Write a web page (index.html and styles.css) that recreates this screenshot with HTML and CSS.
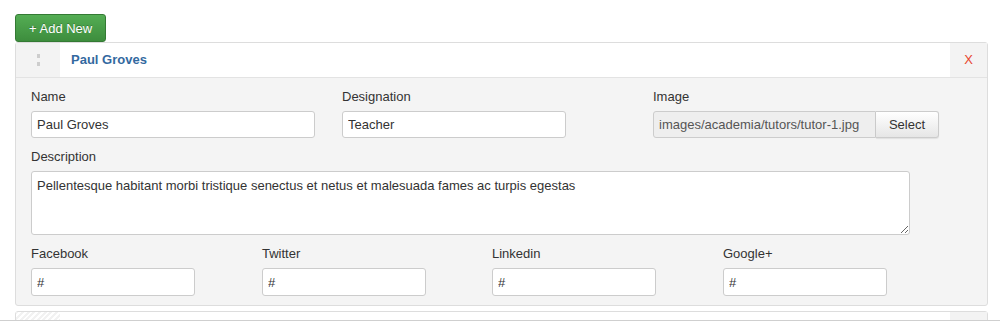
FILE: index.html
```html
<!DOCTYPE html>
<html lang="en">

<head>
    <meta charset="utf-8">
    <title>Tutors</title>
    <link rel="stylesheet" href="styles.css">
</head>

<body>
    <div class="page">
        <button class="add-btn">+ Add New</button>

        <div class="item">
            <div class="item-head">
                <span class="handle"><span class="grip"></span></span>
                <span class="item-title">Paul Groves</span>
                <span class="remove">X</span>
            </div>
            <div class="item-body">
                <div class="row three">
                    <div class="field">
                        <label>Name</label>
                        <input type="text" class="w-name" value="Paul Groves">
                    </div>
                    <div class="field">
                        <label>Designation</label>
                        <input type="text" class="w-desig" value="Teacher">
                    </div>
                    <div class="field">
                        <label>Image</label>
                        <div class="media">
                            <input type="text" class="w-image" value="images/academia/tutors/tutor-1.jpg" readonly>
                            <button class="select-btn">Select</button>
                        </div>
                    </div>
                </div>
                <div class="field">
                    <label>Description</label>
                    <textarea>Pellentesque habitant morbi tristique senectus et netus et malesuada fames ac turpis egestas</textarea>
                </div>
                <div class="row four">
                    <div class="field">
                        <label>Facebook</label>
                        <input type="text" class="w-social" value="#">
                    </div>
                    <div class="field">
                        <label>Twitter</label>
                        <input type="text" class="w-social" value="#">
                    </div>
                    <div class="field">
                        <label>Linkedin</label>
                        <input type="text" class="w-social" value="#">
                    </div>
                    <div class="field">
                        <label>Google+</label>
                        <input type="text" class="w-social" value="#">
                    </div>
                </div>
            </div>
        </div>

        <div class="item collapsed">
            <div class="item-head">
                <span class="handle striped"></span>
                <span class="item-title faded">Teresa Still</span>
                <span class="remove striped"></span>
            </div>
        </div>
    </div>
</body>

</html>
```

FILE: styles.css
```css
* {
    box-sizing: border-box;
}

body {
    margin: 0;
    font-family: "Liberation Sans", Arial, sans-serif;
    font-size: 13px;
    color: #333;
    background: #fff;
}

.page {
    height: 321px;
    overflow: hidden;
    padding: 14px 12px 0 15px;
    border-bottom: 1px solid #cfcfcf;
}

.add-btn {
    display: block;
    height: 28px;
    padding: 0 13px;
    font-family: inherit;
    font-size: 13px;
    color: #fff;
    text-shadow: 0 -1px 0 rgba(0, 0, 0, 0.25);
    background: linear-gradient(#54ad54, #3d8d3d);
    border: 1px solid #347a34;
    border-radius: 3px;
}

.item {
    border: 1px solid #ddd;
    border-radius: 3px;
    background: #f4f4f4;
}

.item.collapsed {
    margin-top: 5px;
    background: #fff;
}

.item-head {
    display: flex;
    height: 35px;
    background: #fff;
    border-bottom: 1px solid #e3e3e3;
}

.handle {
    width: 44px;
    background: #f3f3f3;
    display: flex;
    align-items: center;
    justify-content: center;
}

.grip {
    width: 0;
    height: 12px;
    border-left: 3px dotted #cdcdcd;
}

.striped {
    background: repeating-linear-gradient(135deg, #f2f2f2 0, #f2f2f2 2px, #fff 2px, #fff 4px);
}

.item-title {
    flex: 1;
    padding-left: 11px;
    line-height: 34px;
    font-weight: bold;
    color: #33699f;
}

.item-title.faded {
    color: #8bb7e0;
}

.remove {
    width: 37px;
    background: #f3f3f3;
    color: #e8462f;
    text-align: center;
    line-height: 34px;
}

.item-body {
    padding: 10px 15px 9px 15px;
}

.row {
    display: grid;
}

.row.three {
    grid-template-columns: 311px 311px 1fr;
}

.row.four {
    grid-template-columns: 231px 230px 231px 1fr;
}

.field {
    margin-bottom: 10px;
}

.row.four .field {
    margin-bottom: 0;
}

label {
    display: block;
    line-height: 18px;
    margin-bottom: 5px;
}

input,
textarea {
    display: block;
    height: 27px;
    padding: 0 5px;
    font-family: inherit;
    font-size: 13px;
    color: #333;
    background: #fff;
    border: 1px solid #ccc;
    border-radius: 3px;
}

.w-name {
    width: 284px;
}

.w-desig {
    width: 224px;
}

.w-social {
    width: 164px;
    height: 28px;
}

.media {
    display: flex;
}

.w-image {
    width: 223px;
    background: #eee;
    color: #555;
    border-radius: 3px 0 0 3px;
}

.select-btn {
    width: 63px;
    height: 27px;
    font-family: inherit;
    font-size: 13px;
    color: #333;
    background: linear-gradient(#fff, #e6e6e6);
    border: 1px solid #ccc;
    border-left: none;
    border-radius: 0 3px 3px 0;
    box-shadow: 0 1px 1px rgba(0, 0, 0, 0.08);
}

textarea {
    width: 879px;
    height: 64px;
    padding: 5px 5px;
    line-height: 17px;
    resize: vertical;
}
```
